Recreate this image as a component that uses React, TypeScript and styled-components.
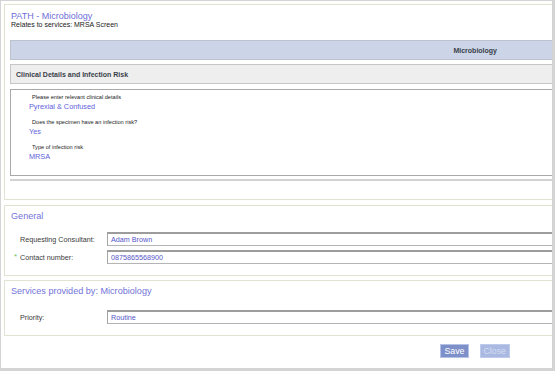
import React from 'react';
import styled, { createGlobalStyle } from 'styled-components';

const GlobalStyle = createGlobalStyle`
  html, body {
    margin: 0;
    padding: 0;
    background: #fff;
  }
  body {
    font-family: 'Liberation Sans', Arial, sans-serif;
  }
`;

const Frame = styled.div`
  width: 555px;
  height: 371px;
  box-sizing: border-box;
  border-style: solid;
  border-color: #d4d4d4;
  border-width: 1px 3px 3px 1px;
  padding: 3px 0 0 3px;
  overflow: hidden;
  background: #fff;
`;

const Stack = styled.div`
  width: 560px;
  display: flex;
  flex-direction: column;
`;

const Panel = styled.div<{ $gap?: number }>`
  border: 1px solid #e2e2d2;
  margin-top: ${(p) => p.$gap ?? 0}px;
  padding-bottom: ${(p) => (p.$gap ? 11 : 18)}px;
`;

const Title = styled.div`
  margin: 6px 0 0 6px;
  font-size: 9px;
  line-height: 10px;
  color: #6e6ed8;
`;

const SubTitle = styled.div`
  margin-left: 6px;
  font-size: 7px;
  line-height: 8px;
  color: #222;
`;

const DeptBar = styled.div`
  margin: 11px 0 0 5px;
  height: 20px;
  box-sizing: border-box;
  border: 1px solid #bcc3cc;
  background: #cbd5e7;
  display: flex;
  align-items: center;
  justify-content: flex-end;
  padding-right: 65px;
  font-size: 7px;
  font-weight: bold;
  color: #3a3f4a;
`;

const SectionBar = styled.div`
  margin: 4px 0 0 5px;
  height: 20px;
  box-sizing: border-box;
  border: 1px solid #c6c6c6;
  background: #eeeeee;
  display: flex;
  align-items: center;
  padding-left: 5px;
  font-size: 7px;
  font-weight: bold;
  color: #3a3f4a;
`;

const ClinicalWrap = styled.div`
  margin: 5px 0 0 5px;
  padding-bottom: 3px;
  border-bottom: 2px solid #d2d2d2;
`;

const ClinicalBox = styled.div`
  border: 1px solid #a9a9a9;
  padding: 4px 0 14px 18px;
  display: flex;
  flex-direction: column;
  gap: 8px;
`;

const Question = styled.div`
  display: flex;
  flex-direction: column;
  gap: 1px;
`;

const Prompt = styled.div`
  padding-left: 3px;
  font-size: 5.6px;
  line-height: 7px;
  color: #222;
`;

const Answer = styled.div`
  font-size: 7.3px;
  line-height: 9px;
  color: #6262dc;
`;

const Heading = styled.div`
  margin: 5px 0 0 6px;
  font-size: 9.1px;
  line-height: 11px;
  color: #7373d9;
`;

const Fields = styled.div<{ $top: number }>`
  margin-top: ${(p) => p.$top}px;
  display: flex;
  flex-direction: column;
  gap: 4px;
`;

const FieldRow = styled.div`
  display: flex;
  align-items: center;
  padding-left: 9px;
`;

const Marker = styled.span`
  width: 6px;
  font-size: 8px;
  line-height: 8px;
  color: #6fbf5c;
`;

const Label = styled.span`
  width: 87px;
  font-size: 7.2px;
  color: #3a3a3a;
`;

const Input = styled.div`
  flex: 1;
  height: 14px;
  box-sizing: border-box;
  border: 1px solid #b4b4b4;
  border-top: 2px solid #9c9c9c;
  border-left-color: #a4a4a4;
  padding-left: 3px;
  display: flex;
  align-items: center;
  font-size: 7.2px;
  color: #5656c8;
`;

const ButtonBar = styled.div`
  margin-top: 8px;
  display: flex;
  justify-content: flex-end;
  gap: 11px;
  padding-right: 42px;
`;

const Button = styled.div<{ $disabled?: boolean }>`
  height: 14px;
  box-sizing: border-box;
  padding: 0 3px;
  min-width: 27px;
  display: flex;
  align-items: center;
  justify-content: center;
  border: 1px solid ${(p) => (p.$disabled ? '#bfcbec' : '#b4c2e6')};
  background: ${(p) => (p.$disabled ? '#aab9e2' : '#7d90c9')};
  color: ${(p) => (p.$disabled ? '#d5ddf2' : '#ffffff')};
  font-size: 8.8px;
`;

const questions = [
  { prompt: 'Please enter relevant clinical details', answer: 'Pyrexial & Confused' },
  { prompt: 'Does the specimen have an infection risk?', answer: 'Yes' },
  { prompt: 'Type of infection risk', answer: 'MRSA' },
];

const App = () => {
  return (
    <>
      <GlobalStyle />
      <Frame>
        <Stack>
          <Panel>
            <Title>PATH - Microbiology</Title>
            <SubTitle>Relates to services: MRSA Screen</SubTitle>
            <DeptBar>Microbiology</DeptBar>
            <SectionBar>Clinical Details and Infection Risk</SectionBar>
            <ClinicalWrap>
              <ClinicalBox>
                {questions.map((q) => (
                  <Question key={q.prompt}>
                    <Prompt>{q.prompt}</Prompt>
                    <Answer>{q.answer}</Answer>
                  </Question>
                ))}
              </ClinicalBox>
            </ClinicalWrap>
          </Panel>

          <Panel $gap={5}>
            <Heading>General</Heading>
            <Fields $top={10}>
              <FieldRow>
                <Marker />
                <Label>Requesting Consultant:</Label>
                <Input>Adam Brown</Input>
              </FieldRow>
              <FieldRow>
                <Marker>*</Marker>
                <Label>Contact number:</Label>
                <Input>0875865568900</Input>
              </FieldRow>
            </Fields>
          </Panel>

          <Panel $gap={4}>
            <Heading>Services provided by: Microbiology</Heading>
            <Fields $top={13}>
              <FieldRow>
                <Marker />
                <Label>Priority:</Label>
                <Input>Routine</Input>
              </FieldRow>
            </Fields>
          </Panel>
        </Stack>
        <ButtonBar>
          <Button>Save</Button>
          <Button $disabled>Close</Button>
        </ButtonBar>
      </Frame>
    </>
  );
};

export default App;
